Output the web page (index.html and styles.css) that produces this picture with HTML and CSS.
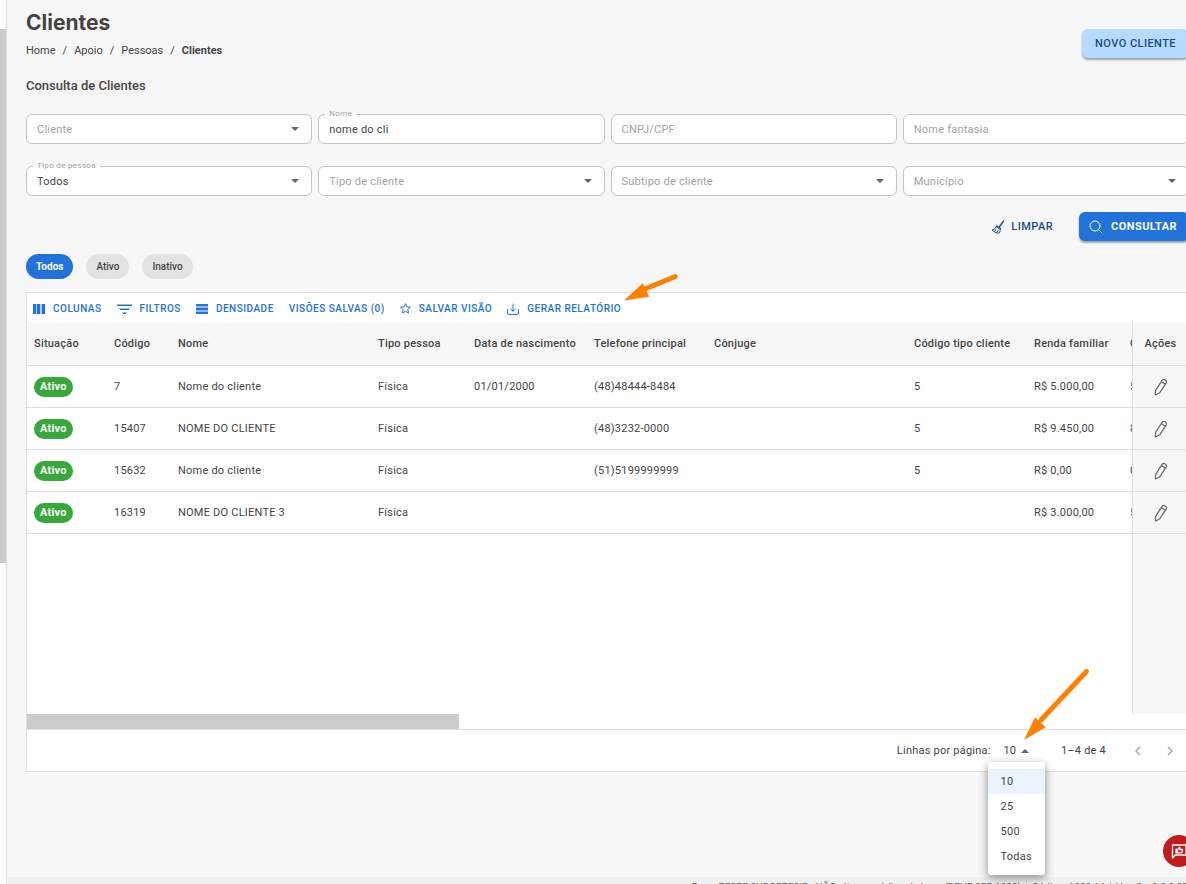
FILE: index.html
```html
<!DOCTYPE html>
<html lang="pt-BR">
  <head>
    <meta charset="UTF-8" />
    <meta name="viewport" content="width=device-width, initial-scale=1.0" />
    <title>Clientes</title>
    <link rel="stylesheet" href="styles.css">
  </head>
  <body>
    <div class="side-strip"><div class="side-thumb"></div></div>

    <div class="page">
      <main class="content">
        <header class="page-header">
          <div>
            <h1>Clientes</h1>
            <nav class="breadcrumb">
              <a href="#">Home</a><span>/</span>
              <a href="#">Apoio</a><span>/</span>
              <a href="#">Pessoas</a><span>/</span>
              <strong>Clientes</strong>
            </nav>
          </div>
          <button class="btn btn-light" type="button">NOVO CLIENTE</button>
        </header>

        <h2>Consulta de Clientes</h2>

        <form>
          <div class="filters">
            <div class="field arrow">
              <input type="text" placeholder="Cliente" aria-label="Cliente" />
            </div>
            <div class="field">
              <label for="nome">Nome</label>
              <input id="nome" type="text" value="nome do cli" />
            </div>
            <div class="field">
              <input type="text" placeholder="CNPJ/CPF" aria-label="CNPJ/CPF" />
            </div>
            <div class="field">
              <input type="text" placeholder="Nome fantasia" aria-label="Nome fantasia" />
            </div>
            <div class="field arrow">
              <label for="tipo-pessoa">Tipo de pessoa</label>
              <select id="tipo-pessoa"><option>Todos</option></select>
            </div>
            <div class="field arrow">
              <select class="empty" aria-label="Tipo de cliente"><option>Tipo de cliente</option></select>
            </div>
            <div class="field arrow">
              <select class="empty" aria-label="Subtipo de cliente"><option>Subtipo de cliente</option></select>
            </div>
            <div class="field arrow">
              <input type="text" placeholder="Município" aria-label="Município" />
            </div>
          </div>

          <div class="actions">
            <button class="btn btn-text" type="reset">
              <svg width="14" height="14" viewBox="0 0 14 14" fill="none" stroke="currentColor" stroke-linecap="round" stroke-linejoin="round">
                <path d="M12.500 1 8.600 6.500" stroke-width="1.300" />
                <path d="M6 5.600 10 8.400 9.300 9.600 5.200 6.800Z" fill="currentColor" stroke-width=".6" />
                <path d="M5 7.200C4.200 8.900 2.700 9.700 1 10 2.800 12 5.500 13.200 8.200 13 9.100 12 9.400 10.900 9.200 9.800" />
                <path d="M3.200 11.300 5.200 9.600M5.600 12.500 7 10.600" />
              </svg>
              LIMPAR
            </button>
            <button class="btn btn-primary" type="button">
              <svg width="14" height="14" viewBox="0 0 14 14" fill="none" stroke="currentColor" stroke-linecap="round">
                <circle cx="6" cy="6" r="5" />
                <path d="M9.700 9.700 13 13" />
              </svg>
              CONSULTAR
            </button>
          </div>
        </form>

        <div class="chips">
          <button class="chip selected" type="button">Todos</button>
          <button class="chip" type="button">Ativo</button>
          <button class="chip" type="button">Inativo</button>
        </div>

        <section class="grid">
          <div class="toolbar">
            <button type="button">
              <svg width="12" height="10" viewBox="0 0 12 10" fill="currentColor">
                <path d="M0 0h3v10H0zM4 0h3v10H4zM9 0h3v10H9z" />
                <path d="M3 0h1v10H3zM7 0h2v10H7z" opacity=".35" />
              </svg>
              COLUNAS
            </button>
            <button type="button">
              <svg width="15" height="10" viewBox="0 0 15 10" fill="currentColor">
                <path d="M0 1h15v1H0zM3 5h9v1H3zM6 9h3v1H6z" />
                <path d="M0 0h15v1H0zM2 4h11v1H2zM5 8h5v1H5z" opacity=".5" />
              </svg>
              FILTROS
            </button>
            <button type="button">
              <svg width="12" height="10" viewBox="0 0 12 10" fill="currentColor">
                <path d="M0 0h12v2H0zM0 4h12v2H0zM0 8h12v2H0z" />
                <path d="M0 2h12v2H0zM0 6h12v2H0z" opacity=".5" />
              </svg>
              DENSIDADE
            </button>
            <button type="button">VISÕES SALVAS (0)</button>
            <button type="button">
              <svg width="11" height="11" viewBox="0 0 11 11" fill="none" stroke="currentColor" stroke-linejoin="round">
                <path d="M5.500.7 6.900 3.800 10.400 4.200 7.800 6.500 8.500 10 5.500 8.300 2.500 10 3.200 6.500.6 4.200 4.100 3.800Z" />
              </svg>
              SALVAR VISÃO
            </button>
            <button type="button">
              <svg width="12" height="12" viewBox="0 0 12 12" fill="none" stroke="currentColor" stroke-linecap="round" stroke-linejoin="round">
                <path d="M.6 6.500v3.500q0 1.400 1.400 1.400h8q1.400 0 1.400-1.400V6.500M6 1v7M3.800 6 6 8.200 8.200 6" />
              </svg>
              GERAR RELATÓRIO
            </button>
          </div>

          <div class="table-wrap">
            <table>
              <colgroup>
                <col class="w-80"><col class="w-64"><col class="w-200"><col class="w-96"><col class="w-120">
                <col class="w-120"><col class="w-200"><col class="w-120"><col class="w-96"><col class="w-120"><col class="w-56">
              </colgroup>
              <thead>
                <tr>
                  <th>Situação</th>
                  <th>Código</th>
                  <th>Nome</th>
                  <th>Tipo pessoa</th>
                  <th>Data de nascimento</th>
                  <th>Telefone principal</th>
                  <th>Cônjuge</th>
                  <th>Código tipo cliente</th>
                  <th>Renda familiar</th>
                  <th>Código</th>
                  <th class="pinned">Ações</th>
                </tr>
              </thead>
              <tbody>
                <tr>
                  <td><span class="badge">Ativo</span></td>
                  <td>7</td>
                  <td>Nome do cliente</td>
                  <td>Física</td>
                  <td>01/01/2000</td>
                  <td>(48)48444-8484</td>
                  <td></td>
                  <td>5</td>
                  <td>R$ 5.000,00</td>
                  <td>5</td>
                  <td class="pinned"><button class="edit" type="button" aria-label="Editar"><svg width="14" height="18"><use href="#pencil" /></svg></button></td>
                </tr>
                <tr>
                  <td><span class="badge">Ativo</span></td>
                  <td>15407</td>
                  <td>NOME DO CLIENTE</td>
                  <td>Física</td>
                  <td></td>
                  <td>(48)3232-0000</td>
                  <td></td>
                  <td>5</td>
                  <td>R$ 9.450,00</td>
                  <td>8</td>
                  <td class="pinned"><button class="edit" type="button" aria-label="Editar"><svg width="14" height="18"><use href="#pencil" /></svg></button></td>
                </tr>
                <tr>
                  <td><span class="badge">Ativo</span></td>
                  <td>15632</td>
                  <td>Nome do cliente</td>
                  <td>Física</td>
                  <td></td>
                  <td>(51)5199999999</td>
                  <td></td>
                  <td>5</td>
                  <td>R$ 0,00</td>
                  <td>0</td>
                  <td class="pinned"><button class="edit" type="button" aria-label="Editar"><svg width="14" height="18"><use href="#pencil" /></svg></button></td>
                </tr>
                <tr>
                  <td><span class="badge">Ativo</span></td>
                  <td>16319</td>
                  <td>NOME DO CLIENTE 3</td>
                  <td>Física</td>
                  <td></td>
                  <td></td>
                  <td></td>
                  <td></td>
                  <td>R$ 3.000,00</td>
                  <td>5</td>
                  <td class="pinned"><button class="edit" type="button" aria-label="Editar"><svg width="14" height="18"><use href="#pencil" /></svg></button></td>
                </tr>
                <tr class="filler">
                  <td colspan="10"></td>
                  <td class="pinned"></td>
                </tr>
              </tbody>
            </table>
          </div>
          <div class="scrollbar"><div class="scroll-thumb"></div></div>

          <div class="pagination">
            <span id="rows-label">Linhas por página:</span>
            <div class="rows-select">
              <button class="rows-button" type="button" aria-haspopup="listbox" aria-expanded="true" aria-labelledby="rows-label">10</button>
              <ul class="rows-menu" role="listbox" aria-labelledby="rows-label">
                <li role="option" aria-selected="true">10</li>
                <li role="option">25</li>
                <li role="option">500</li>
                <li role="option">Todas</li>
              </ul>
            </div>
            <span class="range">1–4 de 4</span>
            <button class="page-button" type="button" aria-label="Página anterior">
              <svg width="8" height="10" viewBox="0 0 8 10" fill="none" stroke="currentColor" stroke-width="1.500"><path d="M6 1 2 5l4 4" /></svg>
            </button>
            <button class="page-button" type="button" aria-label="Próxima página">
              <svg width="8" height="10" viewBox="0 0 8 10" fill="none" stroke="currentColor" stroke-width="1.500"><path d="M2 1l4 4-4 4" /></svg>
            </button>
          </div>
        </section>
      </main>

      <footer class="page-footer">
        <span>Base: TESTE SUPORTESIE - NÃO altere o código da base (DEVE SER 1000)</span>
        <span>Código: 1000.14</span>
        <span>Versão: 9.0.0.97</span>
      </footer>
    </div>

    <button class="feedback" type="button" aria-label="Feedback">
      <svg width="16" height="16" viewBox="0 0 16 16" fill="none" stroke="currentColor" stroke-width="1.300" stroke-linejoin="round">
        <path d="M1.500 15V2h13.500v10H4.200Z" />
        <path d="M5 6.500h1.500v3.300H5zM6.500 6.500 8.500 4.300l.6.600-.3 1.600h2.700v1.200l-.8 2.100H6.500" />
      </svg>
    </button>

    <!-- orange arrows -->
    <svg class="pointer pointer-report" width="56" height="30" viewBox="0 0 56 30">
      <path d="M22 16 52.300 3.500" stroke="#ff8000" stroke-width="5" stroke-linecap="round" />
      <path d="M1 27.500 19.700 10.300 26.300 23.700Z" fill="#ff8000" />
    </svg>
    <svg class="pointer pointer-rows" width="68" height="74" viewBox="0 0 68 74">
      <path d="M18 53 63.500 4.500" stroke="#ff8000" stroke-width="5" stroke-linecap="round" />
      <path d="M1 73 12 50.300 22.700 60.300Z" fill="#ff8000" />
    </svg>

    <svg class="sprite" width="0" height="0">
      <symbol id="pencil" viewBox="0 0 14 18">
        <path d="M1.600 12.300 8.100 2.300Q9.200.8 10.800 1.700 13.200 3.100 12.300 4.800L5.800 14.700 1.900 16.800Q1.300 17 1.300 16.300ZM7.300 3.600 11.300 6.300" fill="none" stroke="currentColor" stroke-width="1.200" stroke-linejoin="round" />
      </symbol>
    </svg>
  </body>
</html>
```

FILE: styles.css
```css
* {
  box-sizing: border-box;
}

body {
  margin: 0;
  display: flex;
  height: 100vh;
  overflow: hidden;
  background: #f7f7f7;
  color: #444;
  font-family: Roboto, "Liberation Sans", sans-serif;
  font-size: 11px;
}

button,
input,
select {
  font: inherit;
  color: inherit;
}

button {
  border: 0;
  padding: 0;
  background: none;
  cursor: pointer;
}

/* left menu edge */
.side-strip {
  flex: none;
  width: 6px;
  padding-top: 29px;
  background: #fff;
  box-shadow: 0 0 2px rgba(0, 0, 0, 0.3);
}

.side-thumb {
  height: 534px;
  background: #ccc;
}

.page {
  flex: 1;
  min-width: 0;
  margin-left: 1px;
}

.content {
  padding: 10px 0 105px 19px;
  margin-right: -3px;
}

.page-header {
  display: flex;
  justify-content: space-between;
  align-items: flex-end;
}

h1 {
  margin: 0 0 8px;
  font-family: Inter, sans-serif;
  font-size: 21px;
  line-height: 25px;
  font-weight: 700;
}

.breadcrumb {
  display: flex;
  gap: 7px;
  line-height: 15px;
}

.breadcrumb a {
  color: inherit;
  text-decoration: none;
}

h2 {
  margin: 19px 0 20px;
  font-size: 13px;
  line-height: 17px;
  font-weight: 500;
}

.btn {
  display: flex;
  align-items: center;
  height: 29px;
  padding: 0 13px;
  border-radius: 6px;
  font-weight: 500;
  letter-spacing: 0.04em;
}

.btn-light {
  background: #b6dbff;
  color: #174a8c;
  box-shadow: 0 2px 2px rgba(0, 0, 0, 0.35);
}

.btn-text {
  gap: 6px;
  color: #174a8c;
}

.btn-primary {
  gap: 8px;
  padding: 0 12px 0 10px;
  background: #2172d9;
  color: #fff;
  font-weight: 700;
  box-shadow: 0 2px 2px rgba(0, 0, 0, 0.35);
}

.filters {
  display: grid;
  grid-template-columns: repeat(4, 1fr);
  gap: 22px 6px;
}

.field {
  position: relative;
}

.field input,
.field select {
  display: block;
  width: 100%;
  height: 30px;
  padding: 0 10px;
  border: 1px solid #c4c4c4;
  border-radius: 6px;
  background: #fff;
  letter-spacing: 0.02em;
  appearance: none;
  outline: 0;
}

.field input::placeholder,
.field .empty {
  color: #a2a2a2;
}

.field label {
  position: absolute;
  top: -6px;
  left: 7px;
  padding: 0 4px;
  background: linear-gradient(#f7f7f7 50%, #fff 50%);
  color: #a2a2a2;
  font-size: 8px;
  line-height: 12px;
  letter-spacing: 0.04em;
}

.arrow::after {
  content: "";
  position: absolute;
  top: 13px;
  right: 13px;
  border: 4px solid transparent;
  border-top-color: #666;
  border-bottom: 0;
}

.actions {
  display: flex;
  justify-content: flex-end;
  gap: 13px;
  margin-top: 16px;
}

.chips {
  display: flex;
  gap: 13px;
  margin: 13px 0;
}

.chip {
  height: 25px;
  padding: 0 10px;
  border-radius: 13px;
  background: #e3e3e3;
  font-size: 10px;
  font-weight: 500;
}

.chip.selected {
  background: #2172d9;
  color: #fff;
  font-weight: 700;
}

.grid {
  border: 1px solid #e0e0e0;
  background: #fff;
}

.toolbar {
  display: flex;
  gap: 15px;
  height: 29px;
  padding: 2px 6px 0;
}

.toolbar button {
  display: flex;
  align-items: center;
  gap: 8px;
  color: #2172d9;
  font-size: 10px;
  font-weight: 500;
  letter-spacing: 0.05em;
}

.table-wrap {
  overflow: hidden;
}

table {
  width: 100%;
  min-width: 1272px;
  table-layout: fixed;
  border-collapse: separate;
  border-spacing: 0;
}

.w-56 { width: 56px; }
.w-64 { width: 64px; }
.w-80 { width: 80px; }
.w-96 { width: 96px; }
.w-120 { width: 120px; }
.w-200 { width: 200px; }

th,
td {
  height: 42px;
  padding: 0 7px;
  border-bottom: 1px solid #e0e0e0;
  text-align: left;
  white-space: nowrap;
  letter-spacing: 0.02em;
}

th {
  height: 44px;
  background: #f7f7f7;
  font-weight: 500;
}

.pinned {
  position: sticky;
  right: 0;
  padding: 0;
  border-left: 1px solid #e0e0e0;
  background: #f7f7f7;
  text-align: center;
}

.filler td {
  height: 180px;
  border-bottom: 0;
}

.badge {
  display: inline-block;
  padding: 0 6px;
  border-radius: 10px;
  background: #38a83c;
  color: #fff;
  font-weight: 700;
  line-height: 20px;
}

.edit {
  display: inline-flex;
  vertical-align: middle;
  color: #666;
}

.scrollbar {
  border-bottom: 1px solid #e0e0e0;
}

.scroll-thumb {
  width: 432px;
  height: 15px;
  background: #ccc;
}

.pagination {
  display: flex;
  align-items: center;
  justify-content: flex-end;
  height: 41px;
  padding-right: 2px;
  letter-spacing: 0.02em;
}

.rows-select {
  position: relative;
  margin: 0 32px 0 13px;
}

.rows-button {
  display: flex;
  align-items: center;
  gap: 5px;
}

.rows-button::after {
  content: "";
  border: 4px solid transparent;
  border-bottom-color: #666;
  border-top: 0;
}

.rows-menu {
  position: absolute;
  top: 18px;
  left: -16px;
  z-index: 1;
  width: 57px;
  margin: 0;
  padding: 7px 0 6px;
  border-radius: 3px;
  background: #fff;
  box-shadow: 0 3px 10px rgba(0, 0, 0, 0.45);
  list-style: none;
}

.rows-menu li {
  padding: 0 13px;
  line-height: 25px;
}

.rows-menu li[aria-selected="true"] {
  background: #ebf3fc;
}

.range {
  margin-right: 16px;
}

.page-button {
  display: flex;
  justify-content: center;
  width: 32px;
  color: #aaa;
}

.page-footer {
  display: flex;
  justify-content: flex-end;
  margin-right: -2px;
  padding: 4px 0;
  background: #f0f0f0;
  color: #666;
  font-size: 10px;
  line-height: 14px;
  white-space: nowrap;
}

.page-footer span + span {
  margin-left: 5px;
  padding-left: 5px;
  border-left: 1px solid #ccc;
}

.feedback {
  position: fixed;
  right: -9px;
  bottom: 17px;
  display: flex;
  align-items: center;
  justify-content: center;
  width: 32px;
  height: 32px;
  border-radius: 50%;
  background: #c01c1c;
  color: #fff;
}

.pointer {
  position: absolute;
  z-index: 2;
}

.pointer-report {
  left: 623px;
  top: 273px;
}

.pointer-rows {
  left: 1023px;
  top: 667px;
}

.sprite {
  position: absolute;
}
```
